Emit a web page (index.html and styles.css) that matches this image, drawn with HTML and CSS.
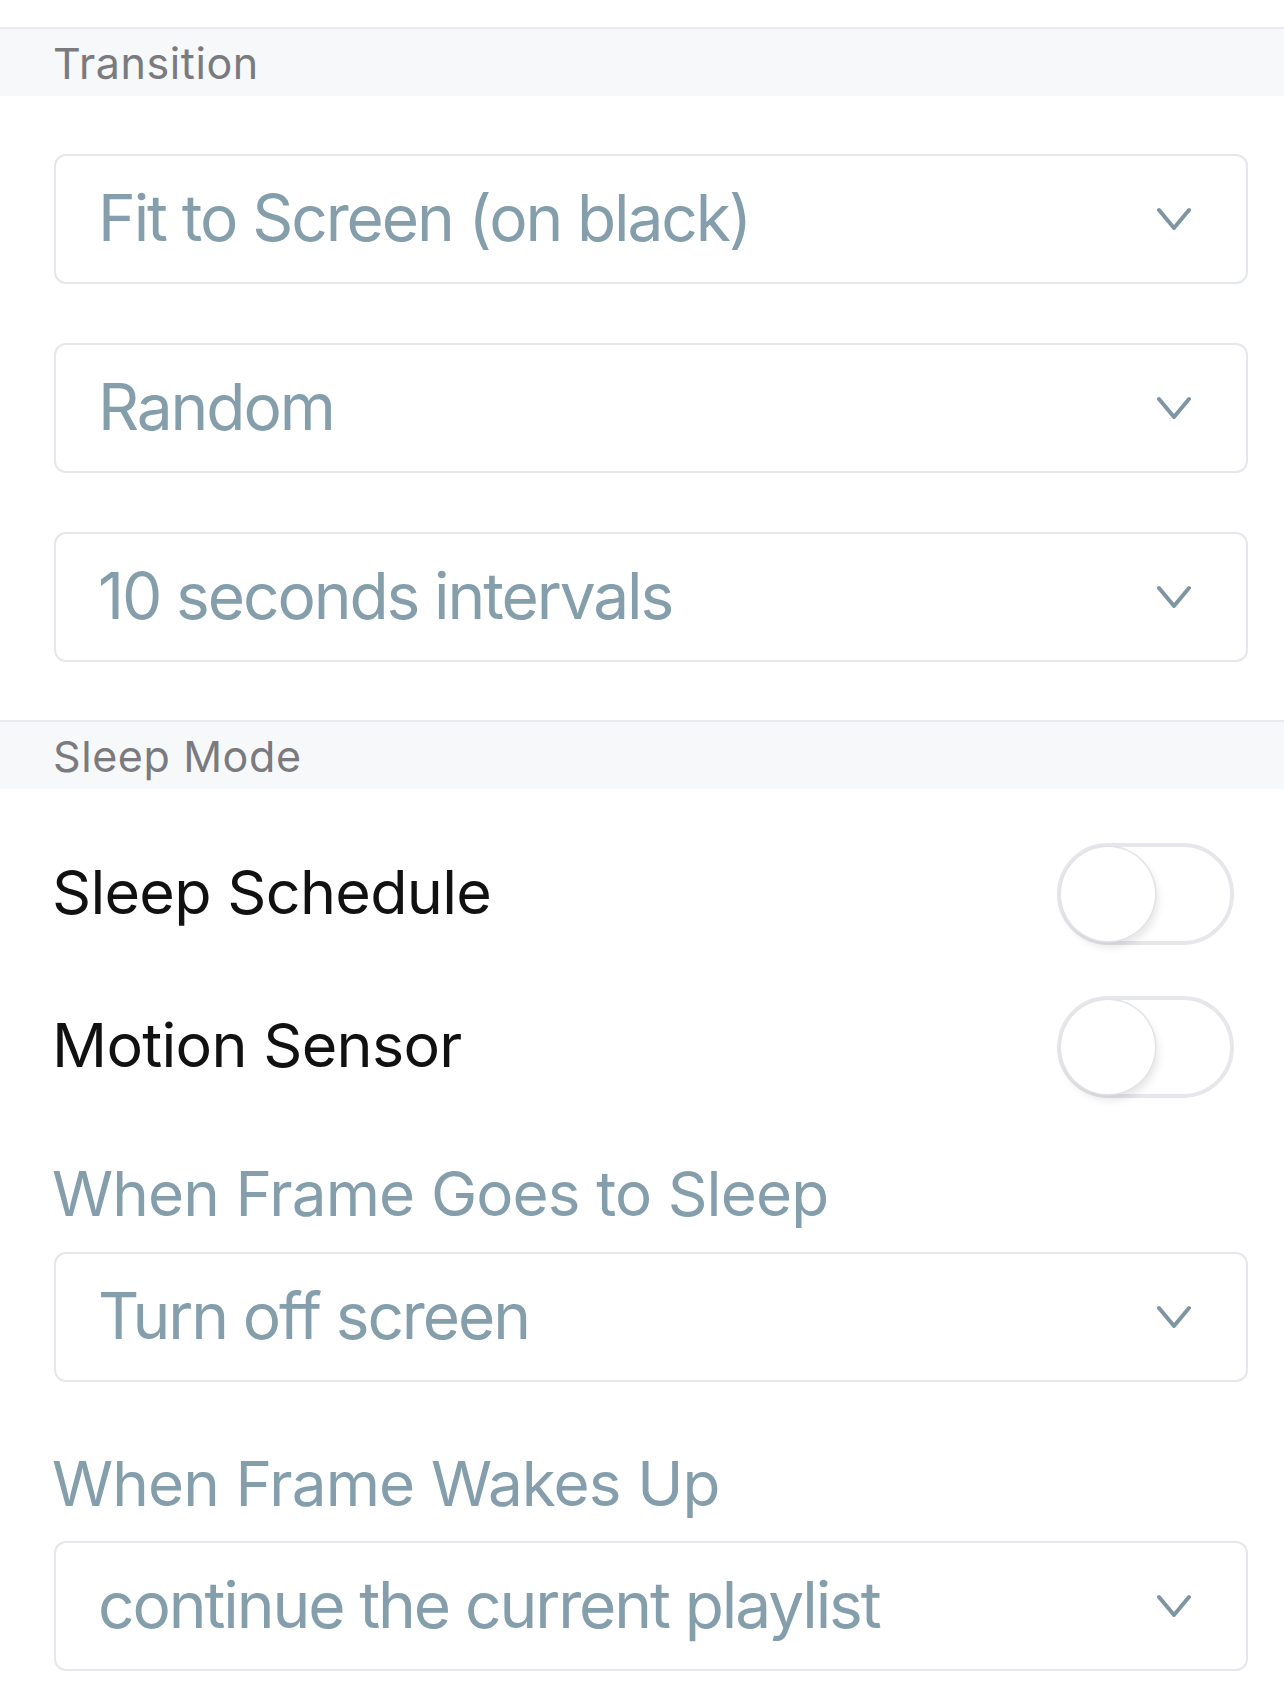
FILE: index.html
```html
<!DOCTYPE html>
<html lang="en">
<head>
<meta charset="utf-8">
<title>Frame Settings</title>
<link rel="stylesheet" href="styles.css">
</head>
<body>
<div class="top-space"></div>

<div class="section-header">Transition</div>
<div class="group">
  <div class="select"><span class="select-text">Fit to Screen (on black)</span><svg class="chev" viewBox="0 0 34 24" width="34" height="24"><polyline points="2,3 17,21 32,3" fill="none" stroke="currentColor" stroke-width="4" stroke-linecap="round" stroke-linejoin="round"/></svg></div>
  <div class="select"><span class="select-text">Random</span><svg class="chev" viewBox="0 0 34 24" width="34" height="24"><polyline points="2,3 17,21 32,3" fill="none" stroke="currentColor" stroke-width="4" stroke-linecap="round" stroke-linejoin="round"/></svg></div>
  <div class="select"><span class="select-text">10 seconds intervals</span><svg class="chev" viewBox="0 0 34 24" width="34" height="24"><polyline points="2,3 17,21 32,3" fill="none" stroke="currentColor" stroke-width="4" stroke-linecap="round" stroke-linejoin="round"/></svg></div>
</div>

<div class="section-header">Sleep Mode</div>
<div class="sleep">
  <div class="toggle-row"><span class="toggle-label">Sleep Schedule</span><span class="toggle"><span class="knob"></span></span></div>
  <div class="toggle-row"><span class="toggle-label">Motion Sensor</span><span class="toggle"><span class="knob"></span></span></div>

  <div class="field-label">When Frame Goes to Sleep</div>
  <div class="select"><span class="select-text">Turn off screen</span><svg class="chev" viewBox="0 0 34 24" width="34" height="24"><polyline points="2,3 17,21 32,3" fill="none" stroke="currentColor" stroke-width="4" stroke-linecap="round" stroke-linejoin="round"/></svg></div>

  <div class="field-label second">When Frame Wakes Up</div>
  <div class="select"><span class="select-text">continue the current playlist</span><svg class="chev" viewBox="0 0 34 24" width="34" height="24"><polyline points="2,3 17,21 32,3" fill="none" stroke="currentColor" stroke-width="4" stroke-linecap="round" stroke-linejoin="round"/></svg></div>
</div>
</body>
</html>
```

FILE: styles.css
```css
html, body {
  margin: 0;
  padding: 0;
  background: #ffffff;
}
body {
  font-family: "Inter", "Roboto", "Liberation Sans", sans-serif;
  width: 1284px;
  overflow: hidden;
}
.top-space {
  height: 27px;
}
.section-header {
  box-sizing: border-box;
  height: 69px;
  border-top: 2px solid #e8eaed;
  background: #f6f8fa;
  padding-left: 53px;
  display: flex;
  align-items: center;
  font-size: 43px;
  color: #7a7a7f;
  letter-spacing: 0.6px;
}
.group {
  padding: 58px 36px 58px 54px;
  display: flex;
  flex-direction: column;
  gap: 59px;
}
.select {
  box-sizing: border-box;
  height: 130px;
  border: 2px solid #e4e7eb;
  border-radius: 12px;
  background: #fff;
  display: flex;
  align-items: center;
  justify-content: space-between;
  padding: 0 55px 0 42px;
  color: #7f98a6;
}
.select-text {
  font-size: 64px;
  color: #859eac;
  letter-spacing: -2.1px;
  margin-top: -4px;
}
.chev {
  display: block;
  color: #7e96a3;
}
.sleep {
  padding: 28px 36px 0 54px;
  display: flex;
  flex-direction: column;
}
.toggle-row {
  height: 153px;
  display: flex;
  align-items: center;
  justify-content: space-between;
  padding-right: 14px;
}
.toggle-label {
  font-size: 61px;
  color: #111111;
  letter-spacing: -0.7px;
  margin-top: -4px;
  margin-left: -2px;
}
.toggle {
  box-sizing: border-box;
  width: 177px;
  height: 102px;
  border: 4px solid #e6e7eb;
  border-radius: 51px;
  background: #fff;
  position: relative;
}
.knob {
  position: absolute;
  left: 0;
  top: 0;
  width: 94px;
  height: 94px;
  border-radius: 50%;
  background: #fff;
  box-shadow: 0 0 0 1.5px #e2e3e7, 3px 6px 8px rgba(0, 0, 0, 0.10);
}
.field-label {
  height: 80px;
  line-height: 80px;
  margin-top: 31px;
  margin-bottom: 18px;
  margin-left: -2px;
  font-size: 62px;
  color: #859eac;
  letter-spacing: -0.9px;
}
.field-label.second {
  margin-top: 62px;
  margin-bottom: 17px;
}
```
